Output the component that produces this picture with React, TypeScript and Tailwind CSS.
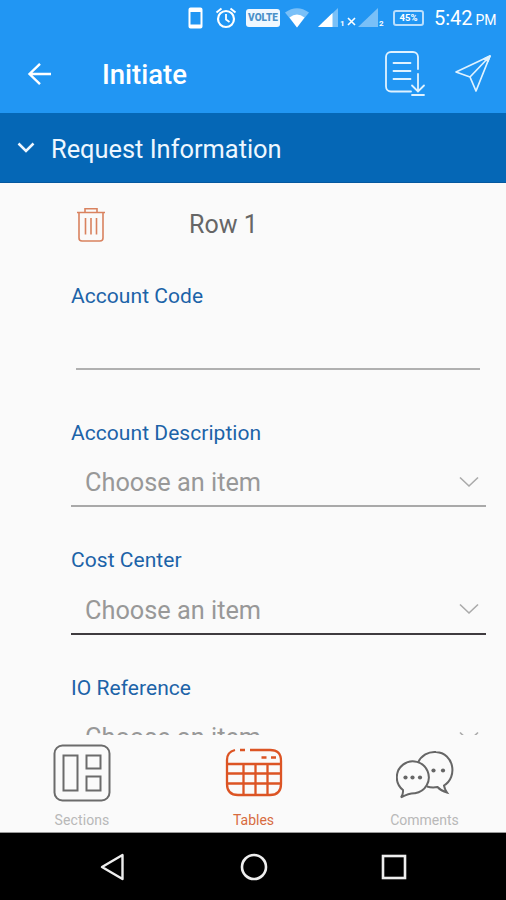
const fields = [
  { label: "Account Description", line: "border-[#a9a9a9]" },
  { label: "Cost Center", line: "border-[#3f3b3f]" },
  { label: "IO Reference", line: "border-[#a9a9a9]" },
];

function StatusBar() {
  return (
    <div className="flex h-9 items-center pl-[188px] text-white">
      <svg className="-mt-px" width="15" height="24" viewBox="0 0 15 24" fill="none">
        <rect x="1.5" y="2.5" width="12" height="19" rx="1" stroke="currentColor" strokeWidth="2" />
        <path d="M1 4.5h13M1 20h13" stroke="currentColor" strokeWidth="3" />
      </svg>
      <svg className="-mt-px ml-3" width="22" height="24" viewBox="0 0 22 24" fill="none" stroke="currentColor">
        <circle cx="11" cy="13" r="8" strokeWidth="2.2" />
        <path d="M11 8v5.5l3.5 2.5" strokeWidth="1.8" />
        <path d="M1.5 6.5l5-4M20.5 6.5l-5-4" strokeWidth="2" />
      </svg>
      <span className="ml-[9px] -mt-px flex h-[18px] w-[34px] items-center justify-center rounded-[3px] bg-[#f0f8ff] text-[10px] font-black text-[#4b91c9]">
        VOLTE
      </span>
      <svg className="ml-[4px] -mt-px" width="26" height="24" viewBox="0 0 26 24" fill="currentColor">
        <path d="M1 6.5Q13-2 25 6.5L13 21.5z" opacity=".4" />
        <path d="M5.5 11.5Q13 5.5 20.5 11.5L13 21.5z" />
      </svg>
      <svg className="ml-[8px]" width="20" height="24" viewBox="0 0 20 24" fill="currentColor">
        <path d="M0 21L20 2v19z" opacity=".4" />
        <path d="M0 21L14.5 7v14z" />
      </svg>
      <span className="ml-[2px] mt-[11px] w-[5px] text-[8px] font-bold leading-none">1</span>
      <svg className="ml-[2px] mt-[7px]" width="9" height="9" viewBox="0 0 9 9" stroke="currentColor" strokeWidth="1.6">
        <path d="M1 1l7 7M8 1L1 8" />
      </svg>
      <svg className="ml-[2px]" width="20" height="24" viewBox="0 0 20 24" fill="currentColor">
        <path d="M0 21L20 2v19z" opacity=".4" />
      </svg>
      <span className="ml-px mt-[11px] w-[5px] text-[8px] font-bold leading-none">2</span>
      <span className="-mt-px ml-[9px] flex h-[16px] w-[31px] items-center justify-center rounded-[3px] border-2 border-[#b9defc] text-[9.5px] font-bold leading-none">
        45%
      </span>
      <span className="ml-[10px] whitespace-nowrap text-[20px] leading-none">
        5:42 <span className="-ml-[2px] text-[14px]">PM</span>
      </span>
    </div>
  );
}

function Chevron() {
  return (
    <svg className="-mt-[3px]" width="20" height="12" viewBox="0 0 20 12" fill="none" stroke="#aaa" strokeWidth="1.6">
      <path d="M1 1.5l9 8.500 9-8.500" />
    </svg>
  );
}

function SelectField({ label, line }: { label: string; line: string }) {
  return (
    <div className="h-[127.5px] shrink-0">
      <div className="text-[21px] leading-[28px] tracking-[0.05px] text-[#1c63a8]">{label}</div>
      <div className={`flex h-[60.5px] items-center justify-between border-b-2 pl-[14px] pr-[7px] pt-[15px] ${line}`}>
        <span className="text-[25.3px] leading-[30px] text-[#989898]">Choose an item</span>
        <Chevron />
      </div>
    </div>
  );
}

export default function App() {
  return (
    <div className="flex h-[900px] w-[506px] flex-col overflow-hidden bg-[#fafafa] font-['Roboto',sans-serif]">
      <header className="h-[113px] shrink-0 bg-[#2196f3]">
        <StatusBar />
        <div className="flex h-[77px] items-center text-white">
          <svg className="-mt-[2px] ml-[27px]" width="24" height="24" viewBox="0 0 24 24" fill="none" stroke="currentColor" strokeWidth="2.4">
            <path d="M24 12H2.5M13 1.8L2.5 12 13 22.200" />
          </svg>
          <h1 className="ml-[51px] w-[232px] text-[27.5px] font-medium leading-none">Initiate</h1>
          <svg className="-mt-[3px] ml-[50px]" width="42" height="48" viewBox="0 0 42 48" fill="none" stroke="#dff2ff" strokeWidth="1.8" strokeLinecap="round">
            <path d="M27 42.500H7a5 5 0 0 1-5-5V8a5 5 0 0 1 5-5h22a5 5 0 0 1 5 5v12" />
            <path d="M9.500 14h17M9.500 22h17M9.500 30h17" />
            <path d="M34 25v17M28 36.500l6 6 6-6M28 46h12" />
          </svg>
          <svg className="-mt-[4px] ml-[28px]" width="38" height="40" viewBox="0 0 38 40" fill="none" stroke="#dff2ff" strokeWidth="1.7" strokeLinejoin="round">
            <path d="M36 3L2 19l14 5 6 14z" />
            <path d="M16 24L36 3" />
            <path d="M36 3l-6 3 4 2z" fill="#dff2ff" />
          </svg>
        </div>
      </header>

      <section className="flex h-[70px] shrink-0 items-center border-b border-[#05589f] bg-[#0567b6] text-[#eef7ff]">
        <svg className="ml-[17px]" width="18" height="12" viewBox="0 0 18 12" fill="none" stroke="currentColor" strokeWidth="2.5">
          <path d="M1.500 1.500L9 9l7.500-7.500" />
        </svg>
        <h2 className="ml-[16px] mt-[5px] text-[25.4px] leading-none">Request Information</h2>
      </section>

      <main className="flex h-[552px] shrink-0 flex-col overflow-hidden pl-[71px] pr-5">
        <div className="flex h-[98.5px] shrink-0 items-start pt-[24px]">
          <svg className="ml-[6px]" width="28" height="36" viewBox="0 0 28 36" fill="none" stroke="#d9825f" strokeWidth="1.6">
            <path d="M0 5.500h28M8 5V1.800h12V5M2 6v25a3 3 0 0 0 3 3h18a3 3 0 0 0 3-3V6" />
            <path d="M8.500 11v16.500M14 11v16.500M19.500 11v16.500" />
          </svg>
          <span className="ml-[84px] mt-[3px] text-[25px] leading-[30px] text-[#666]">Row 1</span>
        </div>
        <div className="h-[137px] shrink-0">
          <label className="block text-[21px] leading-[28px] tracking-[0.05px] text-[#1c63a8]">Account Code</label>
          <div className="ml-[5px] mr-[6px] h-[60px] border-b-2 border-[#b0b0b0]" />
        </div>
        {fields.map((field) => (
          <SelectField key={field.label} label={field.label} line={field.line} />
        ))}
      </main>

      <nav className="flex h-[98px] shrink-0 border-b border-[#999] text-[14px] leading-none">
        <div className="flex w-[164px] flex-col items-center pt-[8.5px] text-[#b8b8b8]">
          <svg width="58" height="58" viewBox="0 0 58 58" fill="none" stroke="#6b6b6b" strokeWidth="2">
            <rect x="1.500" y="1.500" width="55" height="55" rx="8" />
            <rect x="10.500" y="11.500" width="14" height="35" />
            <rect x="33.500" y="11.500" width="14" height="13" />
            <rect x="33.500" y="32.500" width="14" height="14" />
          </svg>
          <span className="mt-[11px] tracking-[0.1px]">Sections</span>
        </div>
        <div className="flex w-[179px] flex-col items-center pt-[9px] text-[#d76b3f]">
          <svg width="58" height="58" viewBox="0 0 58 58" fill="none" stroke="#dc5424" strokeWidth="2.3">
            <path d="M10 6Q2 8 2 16v24q0 11 11 11h32q11 0 11-11V17q0-11-11-11H25M15 6h5" />
            <path d="M2 20h54M2 29.500h54M2 39.500h54M18.500 20v31M30.500 20v31M42.500 20v31M36.500 13.500h5M46 13.500h5" />
          </svg>
          <span className="mt-[11px]">Tables</span>
        </div>
        <div className="flex w-[163px] flex-col items-center pt-[9px] text-[#b8b8b8]">
          <svg width="58" height="58" viewBox="0 0 58 58" fill="none" stroke="#666" strokeWidth="2">
            <path d="M7 46A16 16 0 1 1 19 49.200Q13 49 5 53.500Q7.500 50 7 46z" />
            <path d="M22 18.500A18 18 0 0 1 40 8C58 9 62 33 48 41.500Q48.500 45 51 48.500Q45 47 41.500 43Q36 44 31 42.500" />
            <g fill="#666" stroke="none">
              <circle cx="9.500" cy="33.500" r="2.100" />
              <circle cx="16.500" cy="33.500" r="2.100" />
              <circle cx="24" cy="33.500" r="2.100" />
              <circle cx="37.500" cy="26.500" r="2.100" />
              <circle cx="47" cy="26.500" r="2.100" />
            </g>
          </svg>
          <span className="mt-[11px]">Comments</span>
        </div>
      </nav>

      <footer className="flex h-[67px] shrink-0 items-center bg-black">
        <svg className="ml-[100px]" width="25" height="28" viewBox="0 0 25 28" fill="none" stroke="#eee" strokeWidth="2.4" strokeLinejoin="round">
          <path d="M22.500 2v24L2 14z" />
        </svg>
        <svg className="ml-[115px]" width="28" height="28" viewBox="0 0 28 28" fill="none" stroke="#eee" strokeWidth="2.6">
          <circle cx="14" cy="14" r="12" />
        </svg>
        <svg className="ml-[113px]" width="26" height="26" viewBox="0 0 26 26" fill="none" stroke="#eee" strokeWidth="2.6">
          <rect x="2" y="2" width="22" height="22" />
        </svg>
      </footer>
    </div>
  );
}
